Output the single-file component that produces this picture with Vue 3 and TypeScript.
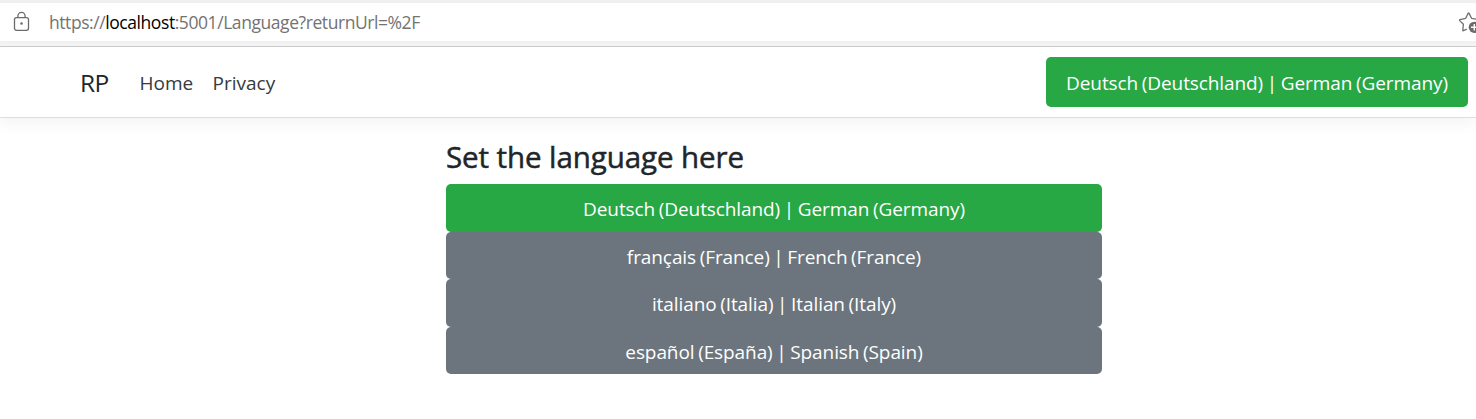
<script setup lang="ts">
interface Culture {
  code: string
  label: string
}

const current = 'de'
const cultures: Culture[] = [
  { code: 'de', label: 'Deutsch (Deutschland) | German (Germany)' },
  { code: 'fr', label: 'français (France) | French (France)' },
  { code: 'it', label: 'italiano (Italia) | Italian (Italy)' },
  { code: 'es', label: 'español (España) | Spanish (Spain)' },
]
</script>

<template>
  <div class="page">
    <div class="toolbar">
      <div class="address">
        <svg class="lock" width="18" height="22" viewBox="0 0 18 22" fill="none" stroke="#6b6b6b" stroke-width="1.3">
          <rect x="1.5" y="6.7" width="14" height="12.6" rx="2" />
          <path d="M4.9 6.5V5a3.6 3.6 0 0 1 7.2 0v1.5" />
          <circle cx="8.5" cy="12.5" r="1.3" fill="#6b6b6b" stroke="none" />
        </svg>
        <span class="url">https://<b>localhost</b>:5001/Language?returnUrl=%2F</span>
        <svg class="star" width="18" height="24" viewBox="0 0 18 24" fill="none">
          <path d="M8.8 19.2 5.5 20.7Q4.7 21 4.8 20.1L5.4 14.3 1.7 10.6Q1.2 9.9 2 9.7L7.7 8.3 10.1 3.4Q10.6 2.6 11.1 3.4L13.5 8.3 19 9.4" stroke="#707070" stroke-width="1.3" stroke-linejoin="round" />
          <circle cx="16.3" cy="17.3" r="5.6" fill="#6b6b6b" />
          <path d="M16.3 14v6.6M13 17.3h6.6" stroke="#fff" stroke-width="1.4" />
        </svg>
      </div>
    </div>
    <header class="navbar">
      <a class="brand">RP</a>
      <nav class="links">
        <a class="home">Home</a>
        <a class="privacy">Privacy</a>
      </nav>
      <button class="btn active nav-btn">{{ cultures[0].label }}</button>
    </header>
    <main class="content">
      <h1>Set the language here</h1>
      <button v-for="c in cultures" :key="c.code" class="btn block" :class="{ active: c.code === current }">
        {{ c.label }}
      </button>
    </main>
  </div>
</template>

<style>
body {
  margin: 0;
  background: #fff;
}
</style>

<style scoped>
.page {
  height: 419px;
  overflow: hidden;
  background: #fff;
  color: #212529;
  font-family: "Open Sans", "Noto Sans", sans-serif;
  font-size: 19px;
}
.toolbar {
  box-sizing: border-box;
  height: 47px;
  padding-top: 3px;
  border-bottom: 1px solid #cbcbcb;
  background: linear-gradient(#efefef 0 41px, #f0f0f0 41px, #f7f7f7 46px);
}
.address {
  display: flex;
  box-sizing: border-box;
  height: 38px;
  padding-left: 13px;
  background: #fff;
}
.lock {
  margin-top: 8px;
}
.url {
  flex: 1;
  margin-left: 18px;
  color: #737373;
  font-size: 17.5px;
  line-height: 38px;
  letter-spacing: -0.43px;
  white-space: nowrap;
}
.url b {
  color: #000;
  font-weight: 400;
}
.star {
  margin-top: 7px;
}
.navbar {
  display: flex;
  align-items: center;
  box-sizing: border-box;
  height: 71px;
  padding: 0 8px 0 80px;
  border-bottom: 1px solid #dedede;
  box-shadow: 0 5px 15px rgba(0, 0, 0, 0.05);
}
.brand {
  width: 59.5px;
  padding-top: 1px;
  font-size: 24.5px;
  letter-spacing: -0.6px;
}
.links {
  display: flex;
  flex: 1;
  padding-top: 1px;
  color: #343a40;
}
.home {
  width: 73px;
}
.btn {
  display: block;
  border: 0;
  border-radius: 5px;
  padding: 0;
  background: #6c757d;
  color: #fff;
  font: inherit;
  line-height: 50px;
  letter-spacing: -0.09px;
  word-spacing: -1.2px;
  text-align: center;
  white-space: nowrap;
}
.active {
  background: #28a745;
}
.nav-btn {
  width: 422px;
  height: 50px;
  line-height: 52px;
}
.content {
  width: 656px;
  margin-left: 446px;
  padding-top: 20px;
}
h1 {
  height: 38px;
  margin: 0 0 8px;
  font-size: 29.5px;
  font-weight: 400;
  line-height: 38px;
  letter-spacing: -0.08px;
  -webkit-text-stroke: 0.5px #212529;
}
.block {
  width: 656px;
  height: 47.5px;
}
</style>
